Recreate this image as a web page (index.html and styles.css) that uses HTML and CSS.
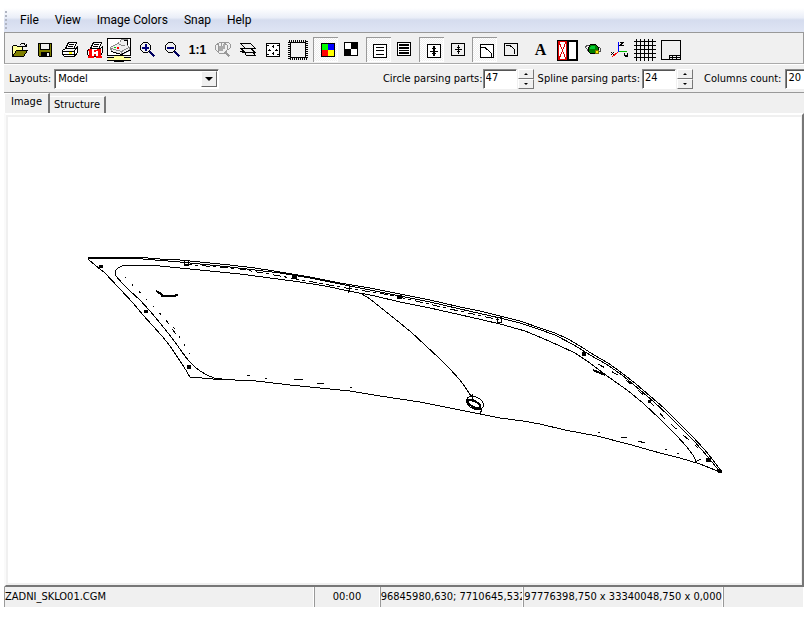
FILE: index.html
```html
<!DOCTYPE html>
<html lang="en">
<head>
<meta charset="utf-8">
<title>ZADNI_SKLO01.CGM</title>
<link rel="stylesheet" href="styles.css">
</head>
<body>
<div class="app">
  <nav class="menu">
    <span class="grip"></span>
    <button>File</button><button>View</button><button>Image Colors</button><button>Snap</button><button>Help</button>
  </nav>

  <div class="toolbar" role="toolbar" aria-label="Drawing tools">
    <div class="group">
      <button aria-label="Open"><svg viewBox="0 0 25 25"><path fill="#ff9" stroke="#000" d="M5.5 18.500V9.500L6.500 8.500H9.500L10.500 9.500H15.500V12.500"/><path fill="#808000" stroke="#000" d="M5.500 19.500L9.500 13.500H20.500L16.500 19.500Z"/><path fill="none" stroke="#000" d="M13 7.500L14.500 6.500H17L18.500 8.500V9.500M16 9.500H19.500V7"/></svg></button>
      <button aria-label="Save"><svg viewBox="0 0 25 25"><path fill="#808000" stroke="#000" d="M6.500 6.500H19.500V19.500H7.500L6.500 18.500Z"/><path fill="#eee" stroke="#000" d="M8.500 6.500H17.500V12.500H8.500Z"/><path d="M9 15H18V20H9Z"/><path fill="#eee" d="M15 16H17V19H15Z"/></svg></button>
      <button aria-label="Print"><svg viewBox="0 0 25 25"><path fill="#fff" stroke="#000" d="M8.500 11.500L11.500 5.500H19.500L16.500 12.500M5.500 13.500L8.500 11.500H18.500L20.500 9.500V15.500L17.500 19.500H7.500L5.500 17.500ZM5.500 14.500H16.500L20.500 10.500M6 17.500H17"/><path stroke="#000" d="M12 7.500H17M11 9.500H16"/><path fill="#ff0" d="M12 15H15V17H12Z"/><path stroke="#000" fill="none" d="M17.500 14V19"/></svg></button>
      <button aria-label="Print at 1:1"><svg viewBox="0 0 25 25"><path fill="#fff" stroke="#000" d="M8.500 11.500L11.500 5.500H19.500L16.500 12.500M5.500 13.500L8.500 11.500H18.500L20.500 9.500V15.500L17.500 19.500H7.500L5.500 17.500Z"/><path stroke="#000" d="M12 7.500H17M11 9.500H16"/><path fill="#f00" d="M7 12H10V19H12V21H6V19H7V14H6V13ZM16 12H19V19H20V21H14V19H16V14H14V13ZM12 13H14V15H12ZM12 17H14V19H12Z"/></svg></button>
      <button aria-label="Printer setup"><svg viewBox="0 0 25 25"><path fill="#fff" d="M1 2H23V18H1Z"/><path fill="none" stroke="#000" d="M.5 1.500H23.500V18.500H.5Z"/><path fill="#eee" stroke="#888" d="M3.500 10.500L12.500 5.500L14.500 2.500H20.500V8.500L22.500 10.500V13.500L14.500 17.500L4.500 14.500Z"/><path fill="none" stroke="#000" d="M4 14.500L14.500 17.500L22.500 13M17 3.500H20.500V8"/><path fill="none" stroke="#888" d="M4 11.500L14.500 14.500L22 10.500M14.500 14V17M12 7.500L18 9"/><path fill="#0c0" d="M7 10H9V11H7Z"/><path fill="#f00" d="M10 10H12V12H10Z"/><path fill="#ff9" d="M7 19H17V23H7ZM1 21H7V23H1ZM17 21H23V23H17Z"/><path stroke="#000" d="M0 20.500H7M17 20.500H24M0 23.500H24M7 24.500H17"/></svg></button>
    </div>
    <div class="group">
      <button aria-label="Zoom in"><svg viewBox="0 0 25 25"><path fill="none" stroke="#000" d="M8.500 5.500H12.500L15.500 8.500V12.500L12.500 15.500H8.500L5.500 12.500V8.500Z"/><path fill="#00007b" d="M7 10H14V12H7ZM10 7H12V14H10Z"/><path fill="none" stroke="#000060" stroke-width="2" d="M14.500 14.500L19.500 19.500"/></svg></button>
      <button aria-label="Zoom out"><svg viewBox="0 0 25 25"><path fill="none" stroke="#000" d="M8.500 5.500H12.500L15.500 8.500V12.500L12.500 15.500H8.500L5.500 12.500V8.500Z"/><path fill="#00007b" d="M7 10H14V12H7Z"/><path fill="none" stroke="#000060" stroke-width="2" d="M14.500 14.500L19.500 19.500"/></svg></button>
      <button class="ratio">1:1</button>
      <button aria-label="Zoom window" disabled><svg viewBox="0 0 25 25"><g fill="none" stroke="#999"><path d="M9.500 5.500H13.500L17.500 8.500V12.500L14.500 16.500H9.500L5.500 12.500V8.500ZM8.500 7V15M11.500 6V9L8.500 12.500M13.500 5.500H18.500L20.500 7.500V10.500L17.500 13.500"/><path stroke-width="2" d="M15 15L19.500 19.500"/></g><path fill="#aaa" d="M9 9H13V7H15V12H13V14H9Z"/></svg></button>
      <button aria-label="Layers"><svg viewBox="0 0 25 25"><g fill="#f0f0f0" stroke="#000"><path d="M9.500 15.500L5.500 14.500H9L17.500 14.500L20.500 18.500H11.500Z"/><path d="M5.500 11.500H15.500L20.500 15.500H10.500Z"/><path d="M5.500 6.500H15.500L20.500 11.500H10.500Z"/></g></svg></button>
      <button aria-label="Fit to window"><svg viewBox="0 0 25 25"><path fill="#fff" stroke="#000" d="M6.500 6.500H19.500V19.500H6.500Z"/><path fill="none" stroke="#000" d="M13 8V11M13 15V18M8 13H11M15 13H18M12 9.500H14M12 16.500H14M9.500 12V14M16.500 12V14"/><path stroke="#000" d="M7 8.500H9M17 8.500H19M7 17.500H9M17 17.500H19"/></svg></button>
      <button aria-label="Frame"><svg viewBox="0 0 25 25"><path fill="none" stroke="#000" stroke-width="2" stroke-dasharray="1 1" d="M4 4H22V22H4Z"/><path fill="#f0f0f0" stroke="#000" d="M5.500 5.500H20.500V20.500H5.500Z"/></svg></button>
    </div>
    <div class="group">
      <button class="on" aria-label="Color" aria-pressed="true"><svg viewBox="0 0 25 25"><path d="M8 6H22V20H8Z"/><path fill="#0f0" d="M9 7H15V13H9Z"/><path fill="#00f" d="M15 7H21V13H15Z"/><path fill="#f00" d="M9 13H15V19H9Z"/><path fill="#ff0" d="M15 13H21V19H15Z"/></svg></button>
      <button aria-label="Black and white"><svg viewBox="0 0 25 25"><path d="M6 5H20V19H6Z"/><path fill="#fff" d="M7 6H13V12H7ZM13 12H19V18H13Z"/></svg></button>
    </div>
    <div class="group">
      <button class="on" aria-label="Thin lines" aria-pressed="true"><svg viewBox="0 0 25 25"><path fill="#fff" stroke="#000" d="M7.500 7.500H20.500V20.500H7.500Z"/><path stroke="#000" d="M10 10.500H18M10 13.500H18M10 17.500H18"/></svg></button>
      <button aria-label="Thick lines"><svg viewBox="0 0 25 25"><path fill="#fff" stroke="#000" d="M6.500 5.500H19.500V18.500H6.500Z"/><path d="M8 7H18V9H8ZM8 10H18V12H8ZM8 13H18V14H8ZM8 15H18V17H8Z"/></svg></button>
    </div>
    <div class="group">
      <button class="on" aria-label="Thick points" aria-pressed="true"><svg viewBox="0 0 25 25"><path fill="#fff" stroke="#000" d="M8.500 7.500H21.500V20.500H8.500Z"/><path d="M14 9H16V19H14ZM11 14H19V15H11Z"/><path stroke="#000" d="M13 11.500H17M13 16.500H17"/></svg></button>
      <button aria-label="Points"><svg viewBox="0 0 25 25"><path fill="#f0f0f0" stroke="#000" d="M7.500 6.500H20.500V18.500H7.500Z"/><path stroke="#000" d="M14.500 8V17M11 12.500H18M13 10.500H16M13 14.500H16"/></svg></button>
    </div>
    <div class="group">
      <button class="on" aria-label="Smooth arcs" aria-pressed="true"><svg viewBox="0 0 25 25"><path fill="#fff" stroke="#000" d="M8.500 7.500H21.500V20.500H8.500Z"/><path fill="none" stroke="#000" d="M9 10.500H13L19.500 16.500V20"/></svg></button>
      <button aria-label="Segmented arcs"><svg viewBox="0 0 25 25"><path fill="#f0f0f0" stroke="#000" d="M7.500 6.500H20.500V18.500H7.500Z"/><path fill="none" stroke="#000" d="M9 8.500H13L17.500 12.500V17"/></svg></button>
    </div>
    <div class="group wide">
      <button class="letter">A</button>
      <button aria-label="Hide raster"><svg viewBox="0 0 25 25"><path d="M3 3H24V24H3Z"/><path fill="#fff" d="M5 5H12V22H5ZM15 5H22V22H15Z"/><path fill="none" stroke="#e00000" d="M4.500 4.500H12.500V22.500H4.500ZM5 5L12 22M12 5L5 22"/></svg></button>
      <button aria-label="3D orbit"><svg viewBox="0 0 25 25"><path fill="none" stroke="#555" d="M10 8.500H6.500L5.500 10.500L9 14.500L16 16.500L20.500 14.500L21 11.500L18 10"/><path fill="#008000" stroke="#000" d="M10.500 7.500H15.500L18.500 10.500V14.500L15.500 16.500H10.500L8.500 14.500V10.500Z"/><path fill="#0c3" d="M11 9H15V12H10Z"/><path fill="#fe0" stroke="#770" d="M15.500 13.500H18.500V16.500H15.500Z"/></svg></button>
      <button aria-label="Axes"><svg viewBox="0 0 25 25"><path fill="none" stroke="#00f" d="M12.500 5V15"/><path fill="none" stroke="#0b0" d="M13 14.500H21"/><path stroke="#f00" d="M12 15L6 20"/><path fill="none" stroke="#000" d="M14 5.500H17L14 8.500H18M5 15L8 18M8 15L5 18M18.500 16V18H20.500M21.500 16V19L19 20"/></svg></button>
      <button aria-label="Grid"><svg viewBox="0 0 25 25"><path fill="none" stroke="#000" d="M2 4.500H24M2 8.500H24M2 12.500H24M2 16.500H24M2 20.500H24M4.500 2V24M8.500 2V24M12.500 2V24M16.500 2V24M20.500 2V24"/></svg></button>
      <button aria-label="Title block"><svg viewBox="0 0 25 25"><path fill="#f0f0f0" stroke="#000" d="M3.500 3.500H22.500V22.500H3.500ZM11.500 22V18.500H22M11 20.500H22M14.500 18V22M18.500 18V22"/></svg></button>
    </div>
  </div>

  <div class="options">
    <label for="layout">Layouts:</label>
    <span class="combo"><select id="layout"><option>Model</option></select><i class="drop"></i></span>
    <div class="params">
      <div class="param"><label for="circle">Circle parsing parts:</label><input id="circle" value="47"><span class="spin"><button aria-label="Increase circle parts"><i class="up"></i></button><button aria-label="Decrease circle parts"><i class="down"></i></button></span></div>
      <div class="param"><label class="spaced" for="spline">Spline parsing parts:</label><input id="spline" value="24"><span class="spin"><button aria-label="Increase spline parts"><i class="up"></i></button><button aria-label="Decrease spline parts"><i class="down"></i></button></span></div>
      <div class="param last"><label for="columns">Columns count:</label><input id="columns" value="20"></div>
    </div>
  </div>

  <div class="tabs" role="tablist">
    <button role="tab" aria-selected="true" class="tab active">Image</button>
    <button role="tab" aria-selected="false" class="tab">Structure</button>
  </div>

  <main class="panel">
    <svg class="drawing" viewBox="8 117 793 466" role="img" aria-label="Rear glass drawing">
      <g fill="none" stroke="#000" stroke-width="1">
        <path d="M88 259L96 266L104 272L120 289L133 303L143 315L162 336L170 346L176 355L184 367L190 377L213 379L256 381L290 385L320 388L350 391L380 396L420 402L450 408L480 414L500 418L523 421L540 424L565 430L597 436L628 444L660 453L680 458L700 464L720 472"/>
        <path d="M88 257H135L160 259L180 260L200 262L230 265L255 268L280 272L310 277L340 283L370 288L400 294L430 300L460 307L480 311L500 316L520 321L540 328L555 333L568 339L580 346L594 355L608 363L622 373L636 384L650 396L664 408L678 422L692 436L704 449L713 460L721 471"/>
        <path d="M88 258H130L180 262L230 267L280 273L310 278L340 284L370 290L400 296L430 302L460 309L500 318L520 323L538 329L555 335L574 345L590 355L606 364L622 375L640 390L654 402L668 415L682 429L694 441L708 457L720 472"/>
        <path d="M88 257V260"/>
        <path d="M116 276L115 271L118 268L122 266L133 265L160 266L180 268L210 271L240 274L270 278L300 282L325 286L349 291L375 296L400 302L430 308L470 317L500 324L525 331L542 338L560 346L575 353L587 361L610 378L627 390L643 403L661 420L677 436L687 447L693 455L697 463"/>
        <path d="M116 276L122 283L130 291L140 300L150 311L160 323L168 333L175 342L182 352L188 360L195 367L200 371L207 375L214 378L222 379M349 285L350 288L348 293"/>
        <path d="M362 294L370 299L380 307L395 319L411 332L425 345L440 359L450 369L460 380L465 387L471 396"/>
        <path stroke-dasharray="8 3 3 4" d="M184 264L240 269L280 276L340 287L390 295L450 309L500 320"/>
        <path stroke-dasharray="7 9" d="M598 364L625 379L647 398L664 418L682 434L698 448"/>
        <path stroke-dasharray="2 8" d="M125 277L148 301L174 328L190 354"/>
        <path d="M166 321L169 324M172 329L176 334M247 375L250 376M265 378H267M294 379L303 380M317 383H324M350 387H352M598 432H600M621 437L627 438M638 441L645 443M665 449H667M677 453L679 454"/>
        <path stroke-width="2" d="M156 291L163 295M161 296H173L178 295M593 370L605 375"/>
        <path d="M184 260H188V265H184ZM497 317H501V322H497ZM695 462L701 459M480 414L482 409L479 407"/>
        <ellipse cx="475" cy="403" rx="9" ry="6" transform="rotate(28 475 403)"/>
        <ellipse cx="474" cy="404" rx="7" ry="3" stroke-width="2" transform="rotate(28 474 404)"/>
        <path d="M467 403V398L472 395V402"/>
      </g>
      <path d="M99 265H103V268H99ZM144 310H148V313H144ZM187 365H191V369H187ZM292 276H297V279H292ZM397 295H402V299H397ZM582 352H586V356H582ZM648 400H651V403H648ZM706 458H711V462H706ZM718 470H722V473H718Z"/>
    </svg>
  </main>

  <footer class="status">
    <span class="file">ZADNI_SKLO01.CGM</span><span class="time">00:00</span><span class="position">96845980,630; 7710645,532</span><span class="size">97776398,750 x 33340048,750 x 0,000</span><span class="rest"></span>
  </footer>
</div>
</body>
</html>
```
FILE: styles.css
```css
* { box-sizing: border-box; }
body {
  margin: 0;
  padding: 8px 7px 0 4px;
  background: #fff;
  color: #000;
  font: 11px/16px "DejaVu Sans Condensed", "DejaVu Sans", sans-serif;
}
button, input, select { font: inherit; color: inherit; border-radius: 0; margin: 0; }
button { padding: 0; border: 0; background: none; }
.app { background: #f0f0f0; }

.menu {
  display: flex;
  align-items: center;
  height: 24px;
  padding-bottom: 1px;
  background: linear-gradient(#fff 0%, #eaeef8 40%, #d5dcee 50%, #dfe5f4 100%);
  font: 12px/16px Roboto, sans-serif;
}
.menu button { padding: 0 8px; }
.grip {
  width: 2px;
  height: 18px;
  margin: 0 5px 0 1px;
  background: repeating-linear-gradient(#b0b5c2 0 2px, transparent 2px 4px);
}

.toolbar {
  display: flex;
  height: 32px;
  padding: 4px 2px 0;
  border: 1px solid #999;
  border-bottom-color: #aaa;
}
.group { display: flex; margin-right: 3px; }
.group:nth-child(6) { margin-right: 6px; }
.group button { width: 25px; height: 25px; flex: none; }
.wide { gap: 1px; }
.group svg { display: block; width: 25px; height: 25px; shape-rendering: crispEdges; }
.group .on {
  background: repeating-conic-gradient(#fff 0 25%, #eee 0 50%) 0 0 / 2px 2px;
  box-shadow: inset 1px 1px #999, inset -1px -1px #fff;
}
.group .ratio { font: bold 12px/24px "Liberation Sans", sans-serif; }
.group .letter { font: bold 16px/25px "Liberation Serif", serif; }

.options {
  display: flex;
  align-items: center;
  height: 29px;
  padding-left: 5px;
  border-top: 1px solid #fff;
  border-bottom: 1px solid #999;
  overflow: hidden;
}
.combo { position: relative; width: 165px; height: 20px; margin-left: 3px; }
select, input {
  appearance: none;
  background: #fff;
  border: 1px solid;
  border-color: #888 #fff #fff #888;
  box-shadow: inset 1px 1px #555;
  outline: 0;
}
select { width: 100%; height: 20px; padding: 0 18px 0 3px; }
.drop {
  position: absolute;
  right: 2px;
  top: 2px;
  width: 16px;
  height: 16px;
  background: #f0f0f0;
  border: 1px solid;
  border-color: #fff #666 #666 #fff;
  pointer-events: none;
}
.drop::after {
  content: "";
  position: absolute;
  left: 3px;
  top: 5px;
  border: 4px solid transparent;
  border-top-color: #000;
  border-bottom: 0;
}
.params { display: flex; margin-left: auto; }
.param { display: flex; align-items: center; }
.param input { width: 34px; height: 20px; padding: 0 0 2px 2px; }
.spaced { margin: 0 2px 0 4px; }
.last { width: 111px; padding-left: 11px; overflow: hidden; }
.last label { flex: none; margin-right: 4px; }
.last input { flex: none; }
.spin { display: flex; flex-direction: column; width: 16px; margin-left: 1px; }
.spin button {
  display: flex;
  align-items: center;
  justify-content: center;
  height: 10px;
  border: 1px solid;
  border-color: #fff #777 #777 #fff;
}
.up, .down { border: 2px solid transparent; }
.up { border-top: 0; border-bottom-color: #000; }
.down { border-bottom: 0; border-top-color: #000; }

.tabs { display: flex; align-items: flex-end; height: 20px; }
.tab { height: 17px; padding: 0 4px; border-right: 2px solid #777; border-top: 1px solid #fff; }
.active { height: 20px; padding: 0 6px 3px; border-left: 1px solid #fff; }

.panel {
  padding: 2px 1px 2px 2px;
  border: 2px solid;
  border-color: #fff #777 #777 #fafafa;
}
.drawing { display: block; width: 100%; background: #fff; shape-rendering: crispEdges; }

.status { display: flex; height: 20px; line-height: 20px; white-space: nowrap; }
.status span { overflow: hidden; border-left: 1px solid #999; border-right: 1px solid #fff; }
.file { flex: 311 1 0; }
.time { flex: 64 1 0; text-align: center; }
.position { flex: 143 1 0; }
.size { flex: none; }
.rest { flex: 80 1 0; }
```
